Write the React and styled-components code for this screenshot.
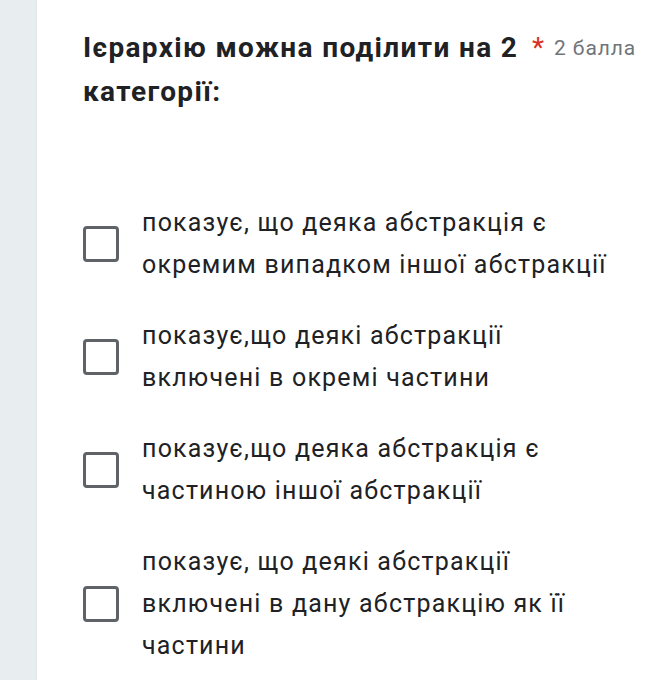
import React from "react";
import styled, { createGlobalStyle } from "styled-components";

const Global = createGlobalStyle`
  html, body { margin: 0; padding: 0; background: #fff; }
  body { font-family: Roboto, "Noto Sans", Arial, sans-serif; }
`;

const Page = styled.div`
  display: flex;
  min-height: 680px;
  width: 658px;
`;

const Side = styled.div`
  width: 36px;
  flex: none;
  background: #e8eef0;
  border-right: 1px solid #dfe5e8;
`;

const Card = styled.div`
  flex: 1;
  padding: 26px 0 0 46px;
`;

const Header = styled.div`
  display: flex;
  align-items: flex-start;
`;

const Title = styled.div`
  width: 446px;
  font-size: 28px;
  font-weight: 700;
  line-height: 44px;
  letter-spacing: 1.35px;
  color: #202124;
`;

const Star = styled.span`
  color: #d93025;
  font-size: 28px;
  line-height: 44px;
  margin-left: 3px;
`;

const Points = styled.span`
  color: #70757a;
  font-size: 21px;
  line-height: 44px;
  letter-spacing: 0.9px;
  margin-left: 10px;
`;

const List = styled.div`
  display: flex;
  flex-direction: column;
  gap: 29px;
  margin-top: 88px;
`;

const Option = styled.label`
  display: flex;
  align-items: center;
  gap: 23px;
`;

const Box = styled.span`
  width: 30px;
  height: 30px;
  flex: none;
  border: 3px solid #5f6368;
  border-radius: 4px;
`;

const Text = styled.span`
  font-size: 25px;
  line-height: 42px;
  letter-spacing: 1.2px;
  color: #202124;
  width: 470px;
`;

const options = [
  "показує, що деяка абстракція є окремим випадком іншої абстракції",
  "показує,що деякі абстракції включені в окремі частини",
  "показує,що деяка абстракція є частиною іншої абстракції",
  "показує, що деякі абстракції включені в дану абстракцію як її частини",
];

export default function App() {
  return (
    <>
      <Global />
      <Page>
        <Side />
        <Card>
          <Header>
            <Title>Ієрархію можна поділити на 2 категорії:</Title>
            <Star>*</Star>
            <Points>2 балла</Points>
          </Header>
          <List>
            {options.map((o) => (
              <Option key={o}>
                <Box />
                <Text>{o}</Text>
              </Option>
            ))}
          </List>
        </Card>
      </Page>
    </>
  );
}
